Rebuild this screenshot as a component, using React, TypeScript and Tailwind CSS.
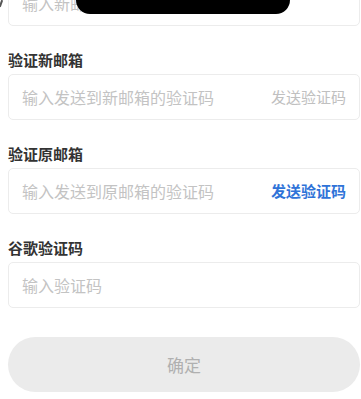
import React from "react";

const FONT = { fontFamily: '"Noto Sans CJK SC", "Noto Sans", sans-serif' };

function Field({
  label,
  placeholder,
  action,
  actionActive,
}: {
  label?: string;
  placeholder: string;
  action?: string;
  actionActive?: boolean;
}) {
  return (
    <div className="flex flex-col">
      {label && (
        <div className="mb-1 text-[15px] font-bold leading-5 text-[#333333]">{label}</div>
      )}
      <div className="flex h-[46px] items-center rounded-[5px] border border-[#ececec] bg-white pl-[13px] pr-[13px]">
        <input
          className="min-w-0 flex-1 bg-transparent text-[16px] text-[#333] outline-none placeholder:text-[#c3c3c3]"
          placeholder={placeholder}
        />
        {action && (
          <button
            className={
              actionActive
                ? "shrink-0 text-[15px] font-semibold text-[#2f73d8]"
                : "shrink-0 text-[15px] text-[#c0c0c0]"
            }
          >
            {action}
          </button>
        )}
      </div>
    </div>
  );
}

export default function App() {
  return (
    <div className="relative h-[399px] w-[361px] overflow-hidden bg-white" style={FONT}>
      {/* notch overlay */}
      <div className="absolute left-[76px] top-0 z-10 h-[14px] w-[214px] rounded-b-[14px] bg-black" />
      <div className="absolute left-0 top-0 z-10 h-[7px] w-[2px] rotate-[20deg] bg-[#555]" />

      <div className="-mt-[20px] flex flex-col gap-6 pl-2 pr-[1px]">
        <Field placeholder="输入新邮箱" />
        <Field label="验证新邮箱" placeholder="输入发送到新邮箱的验证码" action="发送验证码" />
        <Field
          label="验证原邮箱"
          placeholder="输入发送到原邮箱的验证码"
          action="发送验证码"
          actionActive
        />
        <Field label="谷歌验证码" placeholder="输入验证码" />
        <button className="mt-[5px] flex h-[55px] items-center justify-center rounded-full bg-[#ebebeb] text-[17px] text-[#b0b0b0]">
          确定
        </button>
      </div>
    </div>
  );
}
